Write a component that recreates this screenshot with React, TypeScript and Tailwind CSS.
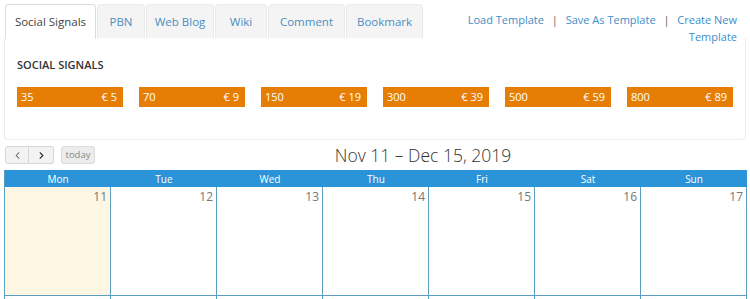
import { ChevronLeft, ChevronRight } from "lucide-react";

const TABS = ["Social Signals", "PBN", "Web Blog", "Wiki", "Comment", "Bookmark"];
const TAB_W = ["w-[91px]", "w-[48px]", "w-[68px]", "w-[52px]", "w-[77px]", "w-[77px]"];

const PACKAGES = [
  { qty: 35, price: 5 },
  { qty: 70, price: 9 },
  { qty: 150, price: 19 },
  { qty: 300, price: 39 },
  { qty: 500, price: 59 },
  { qty: 800, price: 89 },
];

const DAYS = ["Mon", "Tue", "Wed", "Thu", "Fri", "Sat", "Sun"];
const DATES = [11, 12, 13, 14, 15, 16, 17];

export default function App() {
  return (
    <div className="w-[750px] h-[299px] overflow-hidden bg-white text-[#333] font-['Open_Sans',sans-serif]">
      {/* Tabs + template links */}
      <div className="flex items-start justify-between h-[38px] pl-[5px] pr-[13px] pt-[4px]">
        <div className="flex gap-[1px]">
          {TABS.map((t, i) => (
            <div
              key={t}
              className={`${TAB_W[i]} flex items-center justify-center rounded-t-[4px] text-[11.5px] border border-b-0 ${
                i === 0
                  ? "bg-white border-[#dcdcdc] text-[#444] relative z-10 h-[35px]"
                  : "bg-[#f4f4f4] border-[#eaeaea] text-[#4a8ec2] h-[34px]"
              }`}
            >
              {t}
            </div>
          ))}
        </div>
        <div className="text-[11px] text-[#3d8ec9] text-right leading-[17px] pt-[7px] whitespace-nowrap">
          Load Template <span className="text-[#666] mx-[5px]">|</span> Save As Template{" "}
          <span className="text-[#666] mx-[5px]">|</span> Create New
          <br />
          Template
        </div>
      </div>

      {/* Social signals panel */}
      <div className="mx-[4px] h-[102px] border border-t-0 border-[#ececec] rounded-b-[4px] px-[12px] pt-[18px]">
        <div className="text-[11px] leading-[17px] font-semibold text-[#333]">SOCIAL SIGNALS</div>
        <div className="flex gap-[16px] mt-[14px]">
          {PACKAGES.map((p) => (
            <div
              key={p.qty}
              className="w-[107px] h-[20px] bg-[#e67e06] text-white text-[11px] flex items-center justify-between pl-[4px] pr-[6px]"
            >
              <span>{p.qty}</span>
              <span>€ {p.price}</span>
            </div>
          ))}
        </div>
      </div>

      {/* Calendar toolbar */}
      <div className="relative flex items-center h-[30px] px-[5px]">
        <div className="flex">
          <button className="w-[24px] h-[18px] flex items-center justify-center bg-[#f3f3f3] border border-[#d6d6d6] rounded-l-[3px] text-[#555]">
            <ChevronLeft size={11} strokeWidth={2.2} />
          </button>
          <button className="w-[25px] h-[18px] flex items-center justify-center bg-[#f3f3f3] border border-l-0 border-[#d6d6d6] rounded-r-[3px] text-[#333]">
            <ChevronRight size={11} strokeWidth={2.4} />
          </button>
        </div>
        <button className="ml-[7px] w-[34px] h-[18px] bg-[#ececec] border border-[#dcdcdc] rounded-[3px] text-[9.5px] text-[#888] leading-none">
          today
        </button>
        <div className="absolute left-0 right-0 text-center text-[17.5px] font-light text-[#333] pointer-events-none pl-[96px]">
          Nov 11 – Dec 15, 2019
        </div>
      </div>

      {/* Calendar grid */}
      <div className="mx-[4px] w-[743px] border-l border-[#5a9fbf]">
        <div className="grid grid-cols-7 bg-[#2b94d8] h-[17px] border-t border-[#2b94d8]">
          {DAYS.map((d) => (
            <div key={d} className="text-center text-white text-[10px] leading-[16px]">
              {d}
            </div>
          ))}
        </div>
        <div className="grid grid-cols-7 h-[109px] border-b border-[#5a9fbf]">
          {DATES.map((n, i) => (
            <div
              key={n}
              className={`border-r border-[#5a9fbf] text-right pr-[3px] pt-[1px] text-[12px] text-[#777] ${
                i === 0 ? "bg-[#fcf6e2]" : "bg-white"
              }`}
            >
              {n}
            </div>
          ))}
        </div>
        <div className="grid grid-cols-7 h-[20px]">
          {DATES.map((n) => (
            <div key={n} className="border-r border-[#5a9fbf]" />
          ))}
        </div>
      </div>
    </div>
  );
}
